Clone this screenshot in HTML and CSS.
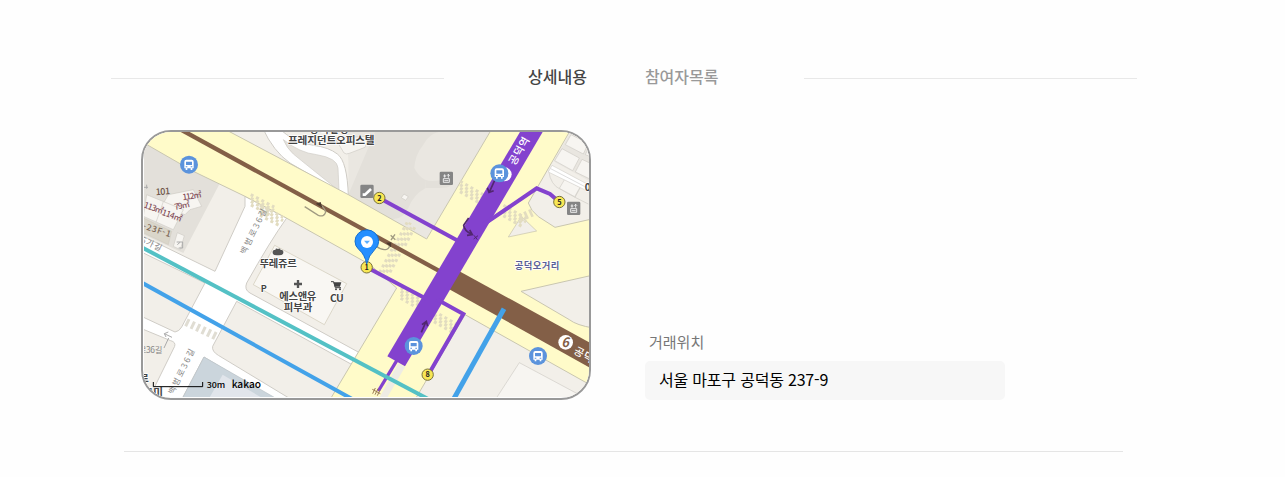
FILE: index.html
```html
<!DOCTYPE html>
<html lang="ko">
<head>
  <meta charset="UTF-8">
  <title>상세내용</title>
  <link rel="stylesheet" href="styles.css">
</head>
<body>

  <div class="container">
    <!-- 탭 버튼 -->
    <div class="tabs">
      <div class="line"></div>
      <div class="tab-list">
        <button class="tab active">상세내용</button>
        <button class="tab">참여자목록</button>
      </div>
      <div class="line"></div>
    </div>

    <!-- 상세 내용 -->
    <div class="detail">
      <div class="map">
        <svg class="map-svg" viewBox="12 12 1335 795" preserveAspectRatio="none">
          <defs>
            <g id="bus">
              <circle r="27" fill="#5b93dc"/>
              <path d="M-14-9q0-6 6-6H8q6 0 6 6V11H10v5H5v-5H-5v5h-5v-5h-4z" fill="#fff"/>
              <path d="M-9-9H9V1H-9zM-10 5h5v3h-5zM5 5h5v3H5z" fill="#5b93dc"/>
            </g>
            <g id="elevator">
              <rect x="-20" y="-20" width="40" height="40" rx="4" fill="#858585"/>
              <path d="M-9 12V1H9v11zM-6 7H6M-5-2v-10M-9-7h8M6-2v-10M2-8l4-4 4 4" class="stroke" stroke="#fff" stroke-width="2.5"/>
            </g>
            <g id="walk" class="stroke" stroke="#e2dcc0" stroke-width="9" stroke-dasharray="9 9">
              <path d="M-40-14H40"/>
              <path d="M-35-5H44"/>
              <path d="M-30 4H40"/>
              <path d="M-25 13H44"/>
            </g>
          </defs>

          <rect x="0" y="0" width="1360" height="820" fill="#f2efe9"/>

          <!-- 건물 부지 -->
          <path d="M0 30L160 130L240 165L130 375L0 315z" fill="#e3e0da"/>
          <path d="M620 12H1050L860 333L625 200L625 100z" fill="#eae7e1"/>
          <path d="M705 12H895Q865 20 850 50Q825 80 823 120Q835 145 855 155L857 180Q820 200 805 240Q785 280 750 272L625 200z" fill="#e3e0da"/>
          <path d="M855 155Q880 165 930 150Q950 180 900 180L857 180z" fill="#e3e0da"/>
          <path d="M585 30L612 75Q618 80 628 76L675 58L688 25z" class="building"/>
          <path d="M792 198l13 8-8 11-13-8z" class="building"/>
          <path d="M85 200L160 185L185 235L150 245L135 260L65 235z" class="building"/>
          <path d="M20 200L130 245L100 305L10 265z" class="building"/>
          <path d="M70 221L48 283" class="stroke" stroke="#cfccc5" stroke-width="2"/>
          <path d="M0 265L95 310L85 350L0 310z" fill="#dad6ca" stroke="#c4bfb3"/>
          <path d="M112 314L133 323L121 365L100 355z" class="building"/>

          <!-- 골목길 -->
          <g class="road">
            <path d="M368 0H415Q465 45 520 52Q567 58 592 78Q622 100 625 205L597 192L450 105Q400 70 368 0z"/>
            <path d="M315 205L440 270Q390 340 320 465Q312 485 330 495L660 675L640 712L290 520L218 655Q215 670 235 682L450 812H400L192 687L125 815H25L104 655Q108 642 92 638L0 600V563L105 612Q118 610 125 597L195 465L0 370V320L225 430L315 235z"/>
          </g>
          <path d="M430 35Q480 75 530 80Q592 90 594 120L597 188Q505 115 460 78Q440 60 430 35z" fill="#e5e2dc" stroke="#cfccc6" stroke-width="2"/>
          <path d="M192 687L125 815H415z" fill="#cbd5dc" stroke="#b9c1c7" stroke-width="2"/>
          <path d="M248 740L205 815H375z" fill="#e1e5eb"/>
          <path d="M404 352L620 467L553 590L340 470z" fill="#f9f7f3" stroke="#cfc8b7" stroke-width="2"/>
          <path d="M1138 704L1340 812H1068z" class="building"/>

          <!-- 큰길 -->
          <path class="main-road" d="M0 38V-20H210L625 200L860 333L1057 0H1295L1165 225Q1172 248 1195 266L1245 298L1360 272V441L1143 490L1288 575Q1310 592 1360 600V776L975 560L825 815H570L770 480L690 410L430 265L315 205L160 130z"/>
          <path d="M1144 265L1105 327L1190 309z" fill="#f2efe9" stroke="#c5c1a9" stroke-width="2"/>
          <path d="M775 706L795 717L738 815H715z" fill="#eeece4"/>

          <!-- 우측 상단 건물 -->
          <path d="M1291 14L1240 100L1360 165V14z" fill="#e9e6e0"/>
          <path d="M1293 20L1345 46L1330 78L1276 50zM1266 62L1318 90L1298 128L1244 98zM1326 94L1360 110V158L1306 132zM1350 50l12 6v34l-26-10z" class="building"/>
          <path d="M1226 128Q1232 172 1262 184L1305 208L1345 228M1281 152L1262 184M1322 176L1305 208" class="stroke" stroke="#cfccc5" stroke-width="2"/>
          <path d="M1274 154L1320 178L1304 206L1258 181z" class="building"/>
          <path d="M1236 112L1360 178V198L1225 132z" fill="#fff" stroke="#d5d2cc" stroke-width="2"/>
          <path d="M1232 122L1350 184" class="stroke" stroke="#ccc" stroke-width="2"/>

          <!-- 횡단보도 -->
          <use href="#walk" transform="translate(361 231) rotate(28)"/>
          <use href="#walk" transform="translate(388 262) rotate(28)"/>
          <use href="#walk" transform="translate(795 325) rotate(-62)"/>
          <use href="#walk" transform="translate(750 405) rotate(-62)"/>
          <use href="#walk" transform="translate(810 512) rotate(30)"/>
          <use href="#walk" transform="translate(910 582) rotate(30)"/>
          <use href="#walk" transform="translate(988 192) rotate(30)"/>
          <use href="#walk" transform="translate(1118 264) rotate(30)"/>
          <path d="M1140 270L1180 252" class="stroke" stroke="#e2dcc0" stroke-width="24" stroke-dasharray="8 8"/>
          <path d="M138 582L232 627" class="stroke" stroke="#e0ddd3" stroke-width="24" stroke-dasharray="9 9"/>

          <!-- 지하철 노선 -->
          <path d="M110 -2L900 430" class="stroke" stroke="#835f47" stroke-width="13"/>
          <path d="M950 425L1360 650V725L925 482z" fill="#835f47"/>
          <path d="M1147 0H1215L795 715L742 685z" fill="#8342ce"/>
          <g class="stroke" stroke="#8342ce" stroke-width="12">
            <path d="M718 210L955 339"/>
            <path d="M1030 290L1190 181L1230 198L1258 222"/>
            <path d="M680 418L860 513"/>
            <path d="M890 514L970 558L865 740"/>
            <path d="M772 695L715 789" stroke-width="10"/>
          </g>
          <path d="M0 355L868 815" class="stroke" stroke="#54c1c5" stroke-width="12"/>
          <path d="M0 461L640 815" class="stroke" stroke="#43a2e9" stroke-width="12"/>
          <path d="M1092 542L940 815" class="stroke" stroke="#43a2e9" stroke-width="15"/>

          <!-- 방향 화살표 -->
          <g class="stroke" stroke="#51276f" stroke-width="5">
            <path d="M1064 157L1049 190M1042 179L1047 193L1061 188"/>
            <path d="M986 270L971 292Q972 307 995 319M981 322L997 320L989 306"/>
            <path d="M1002 322l10 13M1014 323l-13 10" stroke-width="3"/>
            <path d="M844 613L857 583M846 590L859 580L863 595"/>
          </g>
          <g class="stroke" stroke="#a19b82" stroke-width="4">
            <path d="M494 236L535 262Q552 268 557 253Q555 241 540 229"/>
            <path d="M708 354Q725 368 740 364Q751 360 748 346M752 322l14 13M765 319l-12 17"/>
            <path d="M96 628L73 617M73 617l5 10M73 617l12-5M86 630L72 660" stroke="#aaa" stroke-width="3"/>
          </g>
          <path d="M527 227l15-5 5 17zM738 344l16-1-1 15z" fill="#4c3a2d"/>
          <path d="M110 342h18v18h-12M112 350l8-7M20 170v12M12 178h12" class="stroke" stroke="#aaa" stroke-width="3"/>
          <path d="M698 797l8-17M705 800l9-18M712 803l8-17M697 784l24 13" class="stroke" stroke="#9b7a51" stroke-width="3"/>

          <!-- 출구 번호 -->
          <g fill="#f8e754" stroke="#77713c" stroke-width="3">
            <circle cx="718" cy="210" r="17"/>
            <circle cx="1258" cy="222" r="17"/>
            <circle cx="680" cy="418" r="17"/>
            <circle cx="863" cy="740" r="17"/>
          </g>
          <g class="exit">
            <text x="718" y="218">2</text>
            <text x="1258" y="230">5</text>
            <text x="680" y="426">1</text>
            <text x="863" y="748">8</text>
          </g>

          <!-- 아이콘 -->
          <circle cx="1094" cy="139" r="21" fill="#fff"/>
          <circle cx="1088" cy="139" r="16" fill="#8342ce"/>
          <use href="#bus" x="147" y="110"/>
          <use href="#bus" x="1078" y="136"/>
          <use href="#bus" x="821" y="654"/>
          <use href="#bus" x="1194" y="684"/>
          <use href="#elevator" x="919" y="151"/>
          <use href="#elevator" x="1301" y="241"/>
          <rect x="661" y="170" width="40" height="40" rx="4" fill="#858585"/>
          <path d="M668 200L675 200L693 183" class="stroke" stroke="#fff" stroke-width="8"/>
          <path d="M398 375q-1-11 8-9 1-7 8-3 6-4 8 3 9-2 8 9-2 8-16 7-15 1-16-7z" fill="#555"/>
          <path d="M462 468h24M474 456v24" class="stroke" stroke="#555" stroke-width="7"/>
          <path d="M573 461h8l5 18h17" class="stroke" stroke="#444" stroke-width="3"/>
          <path d="M580 463h24l-4 13h-16z" fill="#444"/>
          <circle cx="588" cy="484" r="3" fill="#444"/>
          <circle cx="600" cy="484" r="3" fill="#444"/>
          <circle cx="1277" cy="643" r="22" fill="#fff"/>

          <!-- 지명 -->
          <g class="label">
            <text x="510" y="15" font-size="28" textLength="115">공덕빌딩</text>
            <text x="444" y="47" font-size="32" textLength="260">프레지던트오피스텔</text>
            <text x="359" y="417" font-size="31" textLength="111">뚜레쥬르</text>
            <text x="418" y="515" font-size="31" textLength="111">에스앤유</text>
            <text x="431" y="550" font-size="31" textLength="86">피부과</text>
            <text x="362" y="492" font-size="27" font-weight="700">P</text>
            <text x="570" y="521" font-size="31" textLength="41">CU</text>
            <text x="1334" y="190" font-size="30">0</text>
            <text x="-3" y="762" font-size="32">로</text>
            <text x="10" y="803" font-size="32">그미</text>
            <text x="1124" y="422" font-size="28" textLength="134" fill="#5a5f96">공덕오거리</text>
          </g>
          <text transform="translate(48 202) rotate(-5)" class="building-number" textLength="43">101</text>
          <g class="road-name">
            <text transform="translate(316 381) rotate(-64)" textLength="148">백범로36길</text>
            <text transform="translate(100 801) rotate(-64)" textLength="148">백범로36길</text>
            <text transform="translate(-14 335) rotate(25)" textLength="82">36가길</text>
            <text x="-4" y="674" textLength="71">로36길</text>
          </g>
          <g class="area">
            <text transform="translate(10 238) rotate(20)" textLength="60">113㎡</text>
            <text transform="translate(64 260) rotate(20)" textLength="62">114㎡</text>
            <text transform="translate(105 246) rotate(-12)" textLength="47">79㎡</text>
            <text transform="translate(129 217) rotate(-9)" textLength="58">112㎡</text>
            <text transform="translate(7 302) rotate(17)" fill="#7b6655" textLength="86">-23F-1</text>
          </g>
          <g class="station">
            <text transform="translate(1124 114) rotate(-60)" textLength="91">공덕역</text>
            <text transform="translate(1299 675) rotate(29)" textLength="91">공덕역</text>
          </g>
          <text x="1264" y="657" class="line-number">6</text>

          <!-- 마커 -->
          <path d="M680 408Q675 380 656 364Q645 354 645 340A35 34 0 0 1 716 340Q716 354 704 365Q686 382 680 408z" fill="#258fff" stroke="#1670cf" stroke-width="3"/>
          <circle cx="681" cy="342" r="18" fill="#fff"/>
          <path d="M672 338h18l-9 10z" fill="#5aaeff"/>

          <!-- 축척 -->
          <path d="M40 762V776H188V762" class="stroke" stroke="#000" stroke-width="3"/>
          <text x="200" y="781" class="scale" font-size="24" textLength="56" lengthAdjust="spacingAndGlyphs">30m</text>
          <text x="275" y="781" class="scale" font-size="31" textLength="88" lengthAdjust="spacingAndGlyphs">kakao</text>
        </svg>
      </div>

      <div class="place">
        <div class="place-title">거래위치</div>
        <div class="place-address">서울 마포구 공덕동 237-9</div>
      </div>
    </div>
  </div>

</body>
</html>
```

FILE: styles.css
```css
* {
  box-sizing: border-box;
}
body {
  margin: 0;
  background: #fefefe;
  font-family: "Noto Sans CJK KR", sans-serif;
}
.container {
  width: 1026px;
  margin-left: 111px;
  padding-top: 62px;
}
.tabs {
  display: flex;
  align-items: center;
  height: 32px;
}
.line {
  width: 333px;
  height: 1px;
  background: #e8e8e8;
}
.tab-list {
  display: flex;
  gap: 58px;
  width: 360px;
  padding: 0 0 4px 84px;
}
.tab {
  padding: 0;
  border: none;
  background: none;
  font-family: inherit;
  font-size: 16px;
  font-weight: 500;
  line-height: 24px;
  color: #999;
  cursor: pointer;
}
.tab.active {
  color: #444;
}
.detail {
  display: flex;
  gap: 54px;
  width: 999px;
  margin: 36px 0 0 13px;
  padding: 0 0 51px 17px;
  border-bottom: 1px solid #e5e5e5;
}
.map {
  width: 450px;
  height: 270px;
  padding: 0 0 1px 1px;
  border: 2px solid #999;
  border-radius: 30px;
  overflow: hidden;
}
.map-svg {
  display: block;
  width: 100%;
  height: 100%;
  font-family: "Noto Sans CJK KR", sans-serif;
}
.stroke {
  fill: none;
}
.road {
  fill: #fff;
  stroke: #cfccc6;
  stroke-width: 3;
}
.main-road {
  fill: #fffbc9;
  stroke: #c9c6b0;
  stroke-width: 3;
}
.building {
  fill: #f7f5f1;
  stroke: #cfccc5;
  stroke-width: 2;
}
.label {
  fill: #444;
  stroke: #fff;
  stroke-width: 4;
  stroke-linejoin: round;
  paint-order: stroke;
  font-weight: 700;
}
.building-number {
  fill: #6e5547;
  font-size: 27px;
  font-weight: 500;
}
.road-name {
  fill: #858585;
  font-size: 25px;
}
.area {
  fill: #85505b;
  font-size: 25px;
  font-weight: 500;
}
.station {
  fill: #fff;
  font-size: 32px;
  font-weight: 500;
}
.exit {
  fill: #222;
  font-size: 22px;
  font-weight: 700;
  text-anchor: middle;
}
.line-number {
  fill: #835f47;
  font-size: 39px;
  font-weight: 700;
  font-style: italic;
}
.scale {
  font-weight: 500;
}
.place {
  display: flex;
  flex-direction: column;
  justify-content: flex-end;
  width: 360px;
}
.place-title {
  padding-left: 4px;
  margin-bottom: 8px;
  font-size: 15px;
  line-height: 22px;
  color: #777;
}
.place-address {
  height: 39px;
  padding-left: 14px;
  border-radius: 5px;
  background: #f7f7f7;
  font-size: 16px;
  letter-spacing: -0.2px;
  line-height: 37px;
  color: #000;
}
```
